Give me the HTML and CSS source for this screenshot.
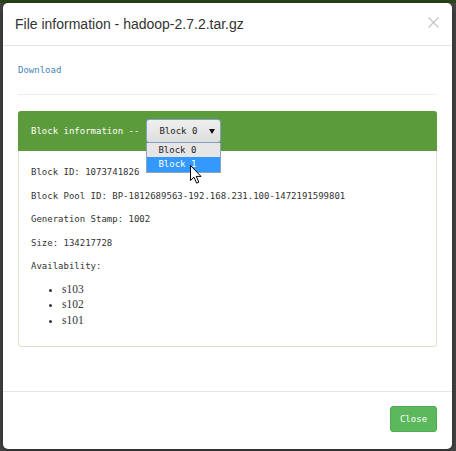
FILE: index.html
```html
<!DOCTYPE html>
<html>
<head>
<meta charset="utf-8">
<title>File information</title>
<link rel="stylesheet" href="styles.css">
</head>
<body>
<div class="navbar"></div>
<div class="modal">
  <div class="modal-header">
    <h4 class="modal-title">File information - hadoop-2.7.2.tar.gz</h4>
    <span class="close"><svg width="11" height="11" viewBox="0 0 11 11"><path d="M0.5 0.5 L10.5 10.5 M10.5 0.5 L0.5 10.5" stroke="#c6c6c6" stroke-width="1.3" fill="none"/></svg></span>
  </div>
  <div class="modal-body">
    <a class="download" href="#">Download</a>
    <hr class="sep">
    <div class="panel">
      <div class="panel-heading">
        <span class="heading-text">Block information --</span>
        <div class="select-wrap">
          <div class="select"><span>Block 0</span><span class="arrow"></span></div>
          <ul class="options">
            <li>Block 0</li>
            <li class="hl">Block 1</li>
          </ul>
          <svg class="cursor" width="12" height="19" viewBox="0 0 12 19"><path d="M0.5 0.5 L0.5 15.5 L4 12.2 L6.6 18.2 L8.8 17.2 L6.3 11.4 L11 11.4 Z" fill="#fff" stroke="#000" stroke-width="1" stroke-linejoin="miter"/></svg>
        </div>
      </div>
      <div class="panel-body">
        <p>Block ID: 1073741826</p>
        <p>Block Pool ID: BP-1812689563-192.168.231.100-1472191599801</p>
        <p>Generation Stamp: 1002</p>
        <p>Size: 134217728</p>
        <p>Availability:</p>
        <ul class="hosts">
          <li>s103</li>
          <li>s102</li>
          <li>s101</li>
        </ul>
      </div>
    </div>
  </div>
  <div class="modal-footer">
    <button class="btn-close">Close</button>
  </div>
</div>
</body>
</html>
```
FILE: styles.css
```css
html, body {
  margin: 0;
  padding: 0;
}
body {
  width: 456px;
  height: 451px;
  background: #484848;
  overflow: hidden;
  font-family: "DejaVu Sans Mono", monospace;
  font-size: 9px;
  color: #333;
}
.navbar {
  height: 3px;
  background: #2b4617;
}
.modal {
  margin: 0 4px 0 3px;
  height: 446px;
  background: #fff;
  border-radius: 5px;
  box-shadow: 0 2px 8px rgba(0,0,0,0.5);
  display: flex;
  flex-direction: column;
}
.modal-header {
  display: flex;
  justify-content: space-between;
  align-items: flex-start;
  padding: 11px 13px 11px 12px;
  border-bottom: 1px solid #e5e5e5;
}
.modal-title {
  margin: 0;
  font-family: "Liberation Sans", Arial, sans-serif;
  font-size: 14px;
  font-weight: normal;
  line-height: 20px;
  color: #333;
}
.close {
  display: block;
  width: 11px;
  height: 11px;
  margin-top: 3px;
}
.close svg {
  display: block;
}
.modal-body {
  flex: 1;
  padding: 16px 15px 0;
}
.download {
  display: block;
  line-height: 16px;
  color: #4584b9;
  text-decoration: none;
}
.sep {
  margin: 16px 0;
  border: 0;
  border-top: 1px solid #eee;
  height: 0;
}
.panel {
  border: 1px solid #d9e3cf;
  border-radius: 3px;
}
.panel-heading {
  margin: -1px -1px 0;
  height: 40px;
  background: #5c9b3b;
  border-radius: 3px 3px 0 0;
  display: flex;
  align-items: center;
  padding: 0 13px;
  color: #fff;
}
.heading-text {
  margin-right: 7px;
}
.select-wrap {
  position: relative;
  width: 75px;
  height: 24px;
}
.select {
  box-sizing: border-box;
  height: 24px;
  border: 1px solid #7fa1c6;
  border-radius: 3px;
  background: linear-gradient(#efefef, #dedede);
  display: flex;
  align-items: center;
  justify-content: space-between;
  padding: 0 5px 0 12px;
  color: #222;
}
.arrow {
  width: 0;
  height: 0;
  border-left: 3px solid transparent;
  border-right: 3px solid transparent;
  border-top: 5px solid #111;
}
.options {
  position: absolute;
  left: 0;
  top: 24px;
  width: 75px;
  box-sizing: border-box;
  margin: 0;
  padding: 0;
  list-style: none;
  border: 1px solid #8fa3bb;
  border-top: 0;
  background: #e6e6e6;
  color: #222;
}
.options li {
  line-height: 14px;
  padding-left: 11px;
}
.options li.hl {
  background: #3399ff;
  color: #fff;
  line-height: 15px;
}
.cursor {
  position: absolute;
  left: 44px;
  top: 46px;
}
.panel-body {
  padding: 13px 12px 18px;
}
.panel-body p {
  margin: 0 0 7.5px;
  line-height: 16px;
}
.hosts {
  margin: 0;
  padding-left: 31px;
  font-family: "Liberation Serif", serif;
  font-size: 11.5px;
  line-height: 15.5px;
  color: #333;
}
.modal-footer {
  border-top: 1px solid #e5e5e5;
  padding: 14px 15px 17px;
  display: flex;
  justify-content: flex-end;
}
.btn-close {
  width: 47px;
  height: 26px;
  padding: 0;
  border: 1px solid #4cae4c;
  border-radius: 3px;
  background: #5cb85c;
  color: #fff;
  font-family: "DejaVu Sans Mono", monospace;
  font-size: 9px;
}
```
